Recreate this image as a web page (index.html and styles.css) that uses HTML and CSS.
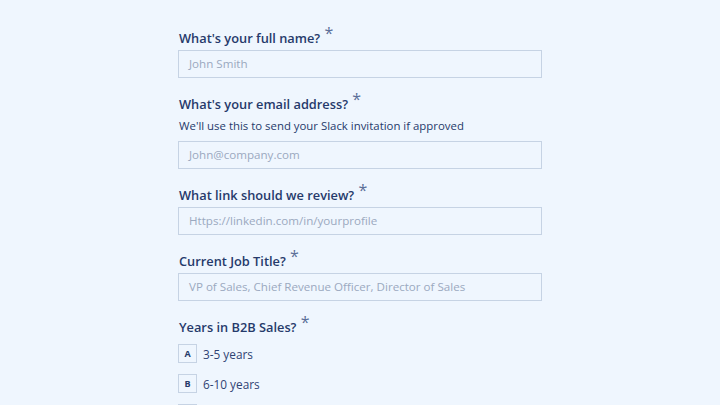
FILE: index.html
```html
<!DOCTYPE html>
<html>
<head>
<meta charset="utf-8">
<link rel="stylesheet" href="styles.css">
</head>
<body>
<main class="form">
  <div class="field">
    <label class="label">What's your full name? <span class="req">*</span></label>
    <div class="input">John Smith</div>
  </div>
  <div class="field">
    <label class="label">What's your email address? <span class="req">*</span></label>
    <p class="help">We'll use this to send your Slack invitation if approved</p>
    <div class="input">John@company.com</div>
  </div>
  <div class="field">
    <label class="label">What link should we review? <span class="req">*</span></label>
    <div class="input">Https://linkedin.com/in/yourprofile</div>
  </div>
  <div class="field">
    <label class="label">Current Job Title? <span class="req">*</span></label>
    <div class="input">VP of Sales, Chief Revenue Officer, Director of Sales</div>
  </div>
  <div class="field">
    <label class="label">Years in B2B Sales? <span class="req">*</span></label>
    <div class="options">
      <div class="option"><span class="key">A</span><span class="opt-text">3-5 years</span></div>
      <div class="option"><span class="key">B</span><span class="opt-text">6-10 years</span></div>
      <div class="option"><span class="key">C</span><span class="opt-text">10+ years</span></div>
    </div>
  </div>
</main>
</body>
</html>
```
FILE: styles.css
```css
html, body {
  margin: 0;
  padding: 0;
  background: #eff6fe;
  font-family: "Open Sans", "Noto Sans", sans-serif;
  color: #263a6b;
}
.form {
  width: 364px;
  margin: 0 0 0 178px;
  padding-top: 28px;
  display: flex;
  flex-direction: column;
  gap: 16px;
}
.field {
  display: flex;
  flex-direction: column;
}
.label {
  display: block;
  height: 20px;
  font-size: 12.8px;
  font-weight: 600;
  line-height: 20px;
  padding-left: 1px;
  margin-bottom: 2px;
  color: #263a6b;
}
.req {
  display: inline-block;
  font-size: 16px;
  font-weight: 400;
  line-height: 10px;
  color: #5b6f98;
  position: relative;
  top: -4px;
  margin-left: 1px;
}
.help {
  margin: 2px 0 7px 1px;
  font-size: 11.4px;
  line-height: 16px;
  color: #263a6b;
}
.input {
  box-sizing: border-box;
  height: 28px;
  border: 1px solid #c6d3e4;
  background: #eff6fe;
  padding: 0 10px;
  font-size: 11.6px;
  line-height: 26px;
  color: #9ba9c0;
}
.options {
  display: flex;
  flex-direction: column;
  gap: 11px;
  margin-top: 5px;
}
.option {
  display: flex;
  align-items: center;
  gap: 6px;
}
.key {
  box-sizing: border-box;
  width: 19px;
  height: 19px;
  border: 1px solid #c6d3e4;
  display: flex;
  align-items: center;
  justify-content: center;
  font-size: 9px;
  font-weight: 700;
  color: #263a6b;
}
.opt-text {
  font-size: 11.8px;
  color: #2f4373;
}
```
